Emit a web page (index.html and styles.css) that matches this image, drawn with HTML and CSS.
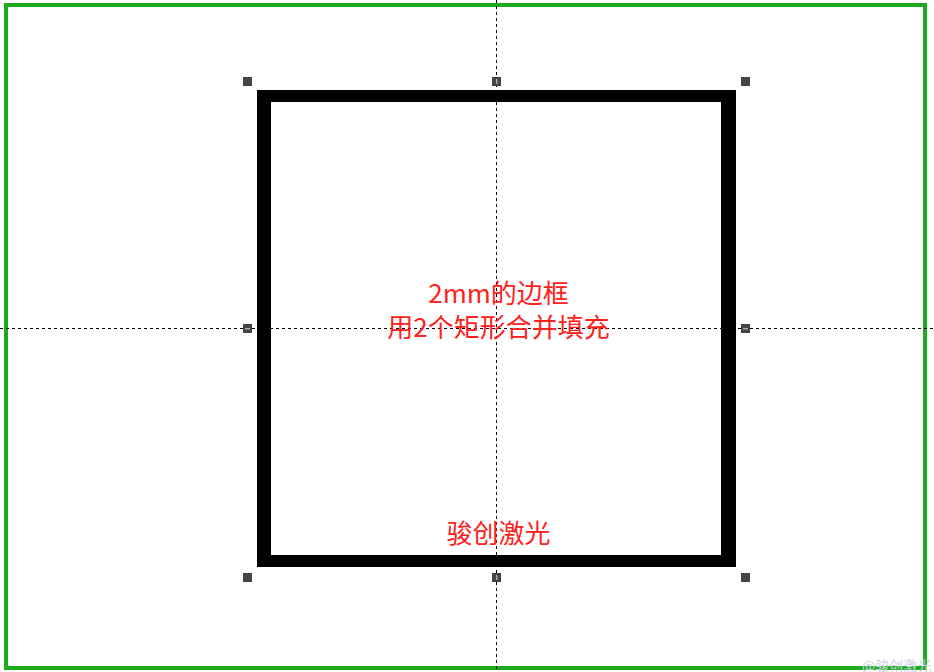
FILE: index.html
```html
<!DOCTYPE html>
<html lang="zh">
<head>
<meta charset="utf-8">
<title>2mm的边框</title>
<link rel="stylesheet" href="styles.css">
</head>
<body>
<div class="stage">
  <svg class="drawing" width="934" height="672" viewBox="0 0 934 672" xmlns="http://www.w3.org/2000/svg">
    <rect x="6" y="5" width="919" height="663" fill="none" stroke="#1fab1f" stroke-width="4"/>
    <path d="M257 90 H736 V567 H257 Z M271 102 V555 H721 V102 Z" fill="#000" fill-rule="evenodd"/>
    <line x1="496.5" y1="0" x2="496.5" y2="672" stroke="#000" stroke-width="1" stroke-dasharray="3 3"/>
    <line x1="0" y1="328.5" x2="934" y2="328.5" stroke="#000" stroke-width="1" stroke-dasharray="3 3"/>
    <g fill="#444">
      <rect x="243" y="77" width="9" height="9"/>
      <rect x="492" y="77" width="9" height="9"/>
      <rect x="741" y="77" width="9" height="9"/>
      <rect x="243" y="324" width="9" height="9"/>
      <rect x="741" y="324" width="9" height="9"/>
      <rect x="243" y="573" width="9" height="9"/>
      <rect x="492" y="573" width="9" height="9"/>
      <rect x="741" y="573" width="9" height="9"/>
    </g>
    <g fill="#a8a8a8">
      <rect x="496" y="79" width="1.5" height="5"/>
      <rect x="496" y="575" width="1.5" height="5"/>
      <rect x="245" y="328" width="5" height="1.5"/>
      <rect x="743" y="328" width="5" height="1.5"/>
    </g>
  </svg>
  <div class="label label-main">
    <div>2mm的边框</div>
    <div>用2个矩形合并填充</div>
  </div>
  <div class="label label-brand">骏创激光</div>
  <div class="watermark">@骏创激光</div>
</div>
</body>
</html>
```

FILE: styles.css
```css
html, body {
  margin: 0;
  padding: 0;
  background: #fff;
}
.stage {
  position: relative;
  width: 934px;
  height: 672px;
  overflow: hidden;
  font-family: "Noto Sans CJK SC", "Noto Sans", sans-serif;
}
.drawing {
  position: absolute;
  left: 0;
  top: 0;
  display: block;
}
.label {
  position: absolute;
  left: 298px;
  width: 401px;
  text-align: center;
  color: #ff2020;
  font-size: 26px;
  line-height: 34px;
  white-space: nowrap;
}
.label-main {
  top: 275px;
}
.label-brand {
  top: 515px;
}
.watermark {
  position: absolute;
  left: 862px;
  top: 655px;
  font-size: 14px;
  line-height: 20px;
  color: #c9d1e2;
  white-space: nowrap;
}
```
